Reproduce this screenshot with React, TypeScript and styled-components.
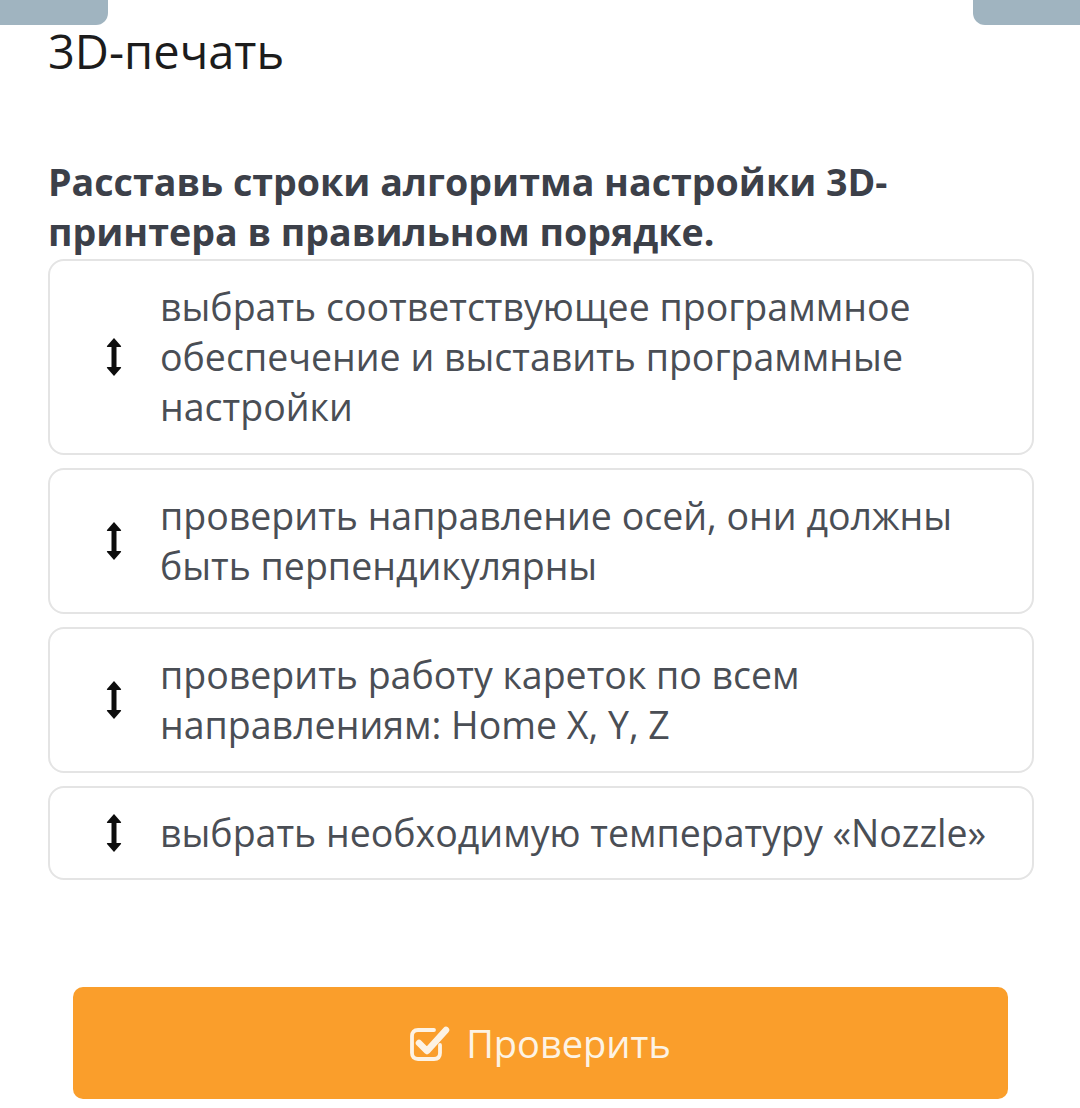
import React from "react";
import styled, { createGlobalStyle } from "styled-components";

const Global = createGlobalStyle`
  html, body { margin: 0; padding: 0; background: #ffffff; }
  body { font-family: "Open Sans", "Noto Sans", sans-serif; }
`;

const Page = styled.div`
  width: 1080px;
  height: 1108px;
  position: relative;
  overflow: hidden;
  background: #fff;
`;

const TopBar = styled.div`
  display: flex;
  justify-content: space-between;
  height: 25px;
`;

const Tab = styled.div<{ $side: "left" | "right" }>`
  width: ${(p) => (p.$side === "left" ? 108 : 107)}px;
  height: 25px;
  background: #a0b4c0;
  border-bottom-${(p) => (p.$side === "left" ? "right" : "left")}-radius: 12px;
`;

const Content = styled.div`
  padding: 0 46px 0 48px;
`;

const Title = styled.h1`
  margin: 0;
  font-size: 47px;
  font-weight: 400;
  line-height: 52px;
  color: #1c1c1c;
`;

const Question = styled.h2`
  margin: 80px 0 0 0;
  font-size: 37.6px;
  font-weight: 700;
  line-height: 50px;
  color: #3c4049;
  width: 900px;
`;

const List = styled.div`
  display: flex;
  flex-direction: column;
  gap: 13px;
  margin-top: 2px;
`;

const Card = styled.div<{ $lines: number }>`
  display: flex;
  align-items: center;
  border: 2px solid #e4e4e4;
  border-radius: 16px;
  padding: ${(p) => (p.$lines === 1 ? "20px" : "21px")} 30px ${(p) => (p.$lines === 1 ? "20px" : "21px")} 0;
  background: #fff;
`;

const Handle = styled.div`
  width: 110px;
  flex: none;
  display: flex;
  justify-content: center;
  padding-left: 18px;
  box-sizing: border-box;
`;

const ItemText = styled.div`
  font-size: 37.5px;
  line-height: 50px;
  color: #4a4e55;
`;

const ButtonWrap = styled.div`
  padding: 107px 72px 0 73px;
`;

const CheckButton = styled.button`
  width: 100%;
  height: 112px;
  border: none;
  border-radius: 10px;
  background: #fa9e2b;
  color: #fdf3e4;
  font-family: "Open Sans", "Noto Sans", sans-serif;
  font-size: 38px;
  display: flex;
  align-items: center;
  justify-content: center;
  gap: 16px;
  padding: 0;
`;

const UpDown = () => (
  <svg width="16" height="40" viewBox="0 0 16 40">
    <path
      d="M8 1 L15 9 Q15.6 10 14.4 10 L10.5 10 L10.5 30 L14.4 30 Q15.6 30 15 31 L8 39 L1 31 Q0.4 30 1.6 30 L5.5 30 L5.5 10 L1.6 10 Q0.4 10 1 9 Z"
      fill="#0d0d0d"
    />
  </svg>
);

const CheckIcon = () => (
  <svg width="40" height="36" viewBox="0 0 40 36">
    <path
      d="M30 20 L30 28 Q30 34 24 34 L8 34 Q2 34 2 28 L2 11 Q2 5 8 5 L24 5"
      fill="none"
      stroke="#fdf3e4"
      strokeWidth="3.8"
      strokeLinecap="round"
    />
    <path
      d="M9 18 L17 26 L36 5"
      fill="none"
      stroke="#fdf3e4"
      strokeWidth="6.5"
      strokeLinecap="round"
      strokeLinejoin="round"
    />
  </svg>
);

const items: { text: string; lines: number }[] = [
  { text: "выбрать соответствующее программное обеспечение и выставить программные настройки", lines: 3 },
  { text: "проверить направление осей, они должны быть перпендикулярны", lines: 2 },
  { text: "проверить работу кареток по всем направлениям: Home X, Y, Z", lines: 2 },
  { text: "выбрать необходимую температуру «Nozzle»", lines: 1 },
];

export default function App() {
  return (
    <Page>
      <Global />
      <TopBar>
        <Tab $side="left" />
        <Tab $side="right" />
      </TopBar>
      <Content>
        <Title>3D-печать</Title>
        <Question>Расставь строки алгоритма настройки 3D-принтера в правильном порядке.</Question>
        <List>
          {items.map((it) => (
            <Card key={it.text} $lines={it.lines}>
              <Handle>
                <UpDown />
              </Handle>
              <ItemText>{it.text}</ItemText>
            </Card>
          ))}
        </List>
      </Content>
      <ButtonWrap>
        <CheckButton>
          <CheckIcon />
          Проверить
        </CheckButton>
      </ButtonWrap>
    </Page>
  );
}
